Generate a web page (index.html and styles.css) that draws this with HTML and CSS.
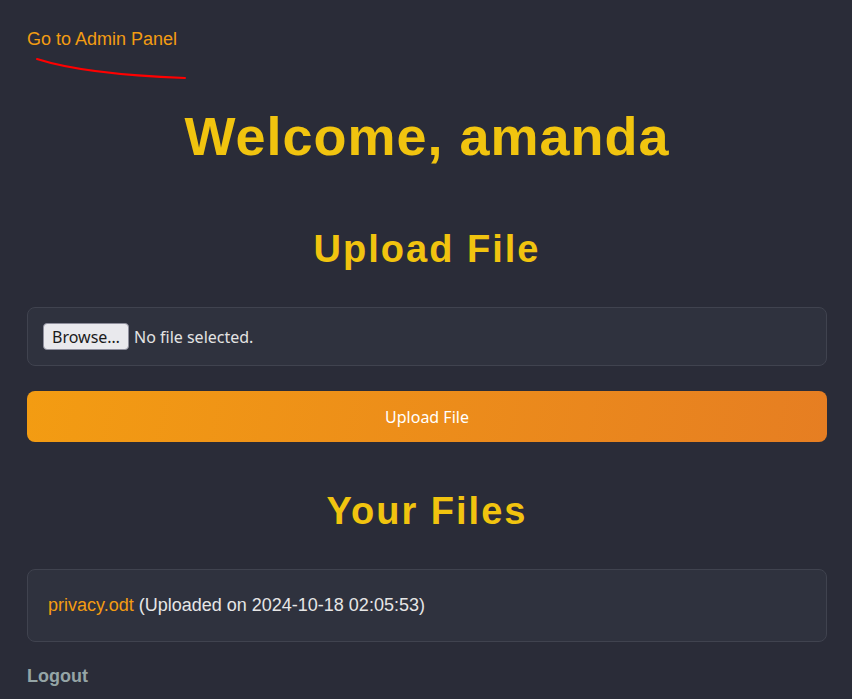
FILE: index.html
```html
<!DOCTYPE html>
<html lang="en">
<head>
<meta charset="utf-8">
<title>Dashboard</title>
<link rel="stylesheet" href="styles.css">
</head>
<body>
<div class="container">
  <div class="admin">
    <a class="admin-link" href="#">Go to Admin Panel</a>
    <svg class="scribble" width="160" height="30" viewBox="0 0 160 30"><path d="M2 3 C 30 12, 70 19, 150 22" fill="none" stroke="#ff0000" stroke-width="2" stroke-linecap="round"/></svg>
  </div>
  <h1 class="welcome">Welcome, amanda</h1>
  <h2 class="section-title">Upload File</h2>
  <form class="upload-form">
    <label class="file-box">
      <input type="file" class="file-input">
      <span class="browse-btn">Browse…</span>
      <span class="file-status">No file selected.</span>
    </label>
    <button type="button" class="upload-btn">Upload File</button>
  </form>
  <h2 class="section-title files-title">Your Files</h2>
  <ul class="file-list">
    <li class="file-item"><a href="#" class="file-link">privacy.odt</a> (Uploaded on 2024-10-18 02:05:53)</li>
  </ul>
  <a href="#" class="logout">Logout</a>
</div>
</body>
</html>
```
FILE: styles.css
```css
html, body {
  margin: 0;
  padding: 0;
  background: #2a2c38;
}
body {
  font-family: "Liberation Sans", Arial, sans-serif;
  color: #e6e6e6;
}
.container {
  width: 800px;
  margin-left: 27px;
  padding-top: 27px;
}
.admin {
  position: relative;
  height: 24px;
}
.admin-link {
  color: #f39c12;
  text-decoration: none;
  font-size: 18px;
  line-height: 24px;
}
.scribble {
  position: absolute;
  left: 8px;
  top: 29px;
}
.welcome {
  color: #f1c40f;
  text-align: center;
  font-size: 54px;
  letter-spacing: 1px;
  margin: 53px 0 0;
  line-height: 64px;
}
.section-title {
  color: #f1c40f;
  text-align: center;
  font-size: 38px;
  letter-spacing: 2px;
  margin: 59px 0 0;
  line-height: 44px;
}
.upload-form {
  margin-top: 36px;
}
.file-box {
  display: flex;
  align-items: center;
  gap: 5px;
  background: #2f323e;
  border: 1px solid #40434f;
  border-radius: 8px;
  padding: 15px;
  font-family: "Noto Sans", sans-serif;
  font-size: 16px;
}
.file-input {
  display: none;
}
.browse-btn {
  box-sizing: border-box;
  height: 27px;
  width: 86px;
  display: flex;
  align-items: center;
  justify-content: center;
  background: #e9e9ed;
  color: #1b1b1b;
  border: 1px solid #8f8f9d;
  border-radius: 4px;
}
.file-status {
  color: #e3e3e3;
}
.upload-btn {
  display: block;
  width: 100%;
  height: 51px;
  margin-top: 25px;
  border: none;
  border-radius: 8px;
  background: linear-gradient(100deg, #f39c12, #e67e22);
  color: #ffffff;
  font-family: "Noto Sans", sans-serif;
  font-size: 16px;
}
.files-title {
  margin-top: 47px;
}
.file-list {
  list-style: none;
  margin: 36px 0 0;
  padding: 0;
}
.file-item {
  background: #2f323e;
  border: 1px solid #40434f;
  border-radius: 8px;
  padding: 20px;
  font-size: 18px;
  line-height: 31px;
}
.file-link {
  color: #f39c12;
  text-decoration: none;
}
.logout {
  display: block;
  margin-top: 20px;
  color: #95a5a6;
  font-weight: bold;
  font-size: 18px;
  text-decoration: none;
  line-height: 28px;
}
```
